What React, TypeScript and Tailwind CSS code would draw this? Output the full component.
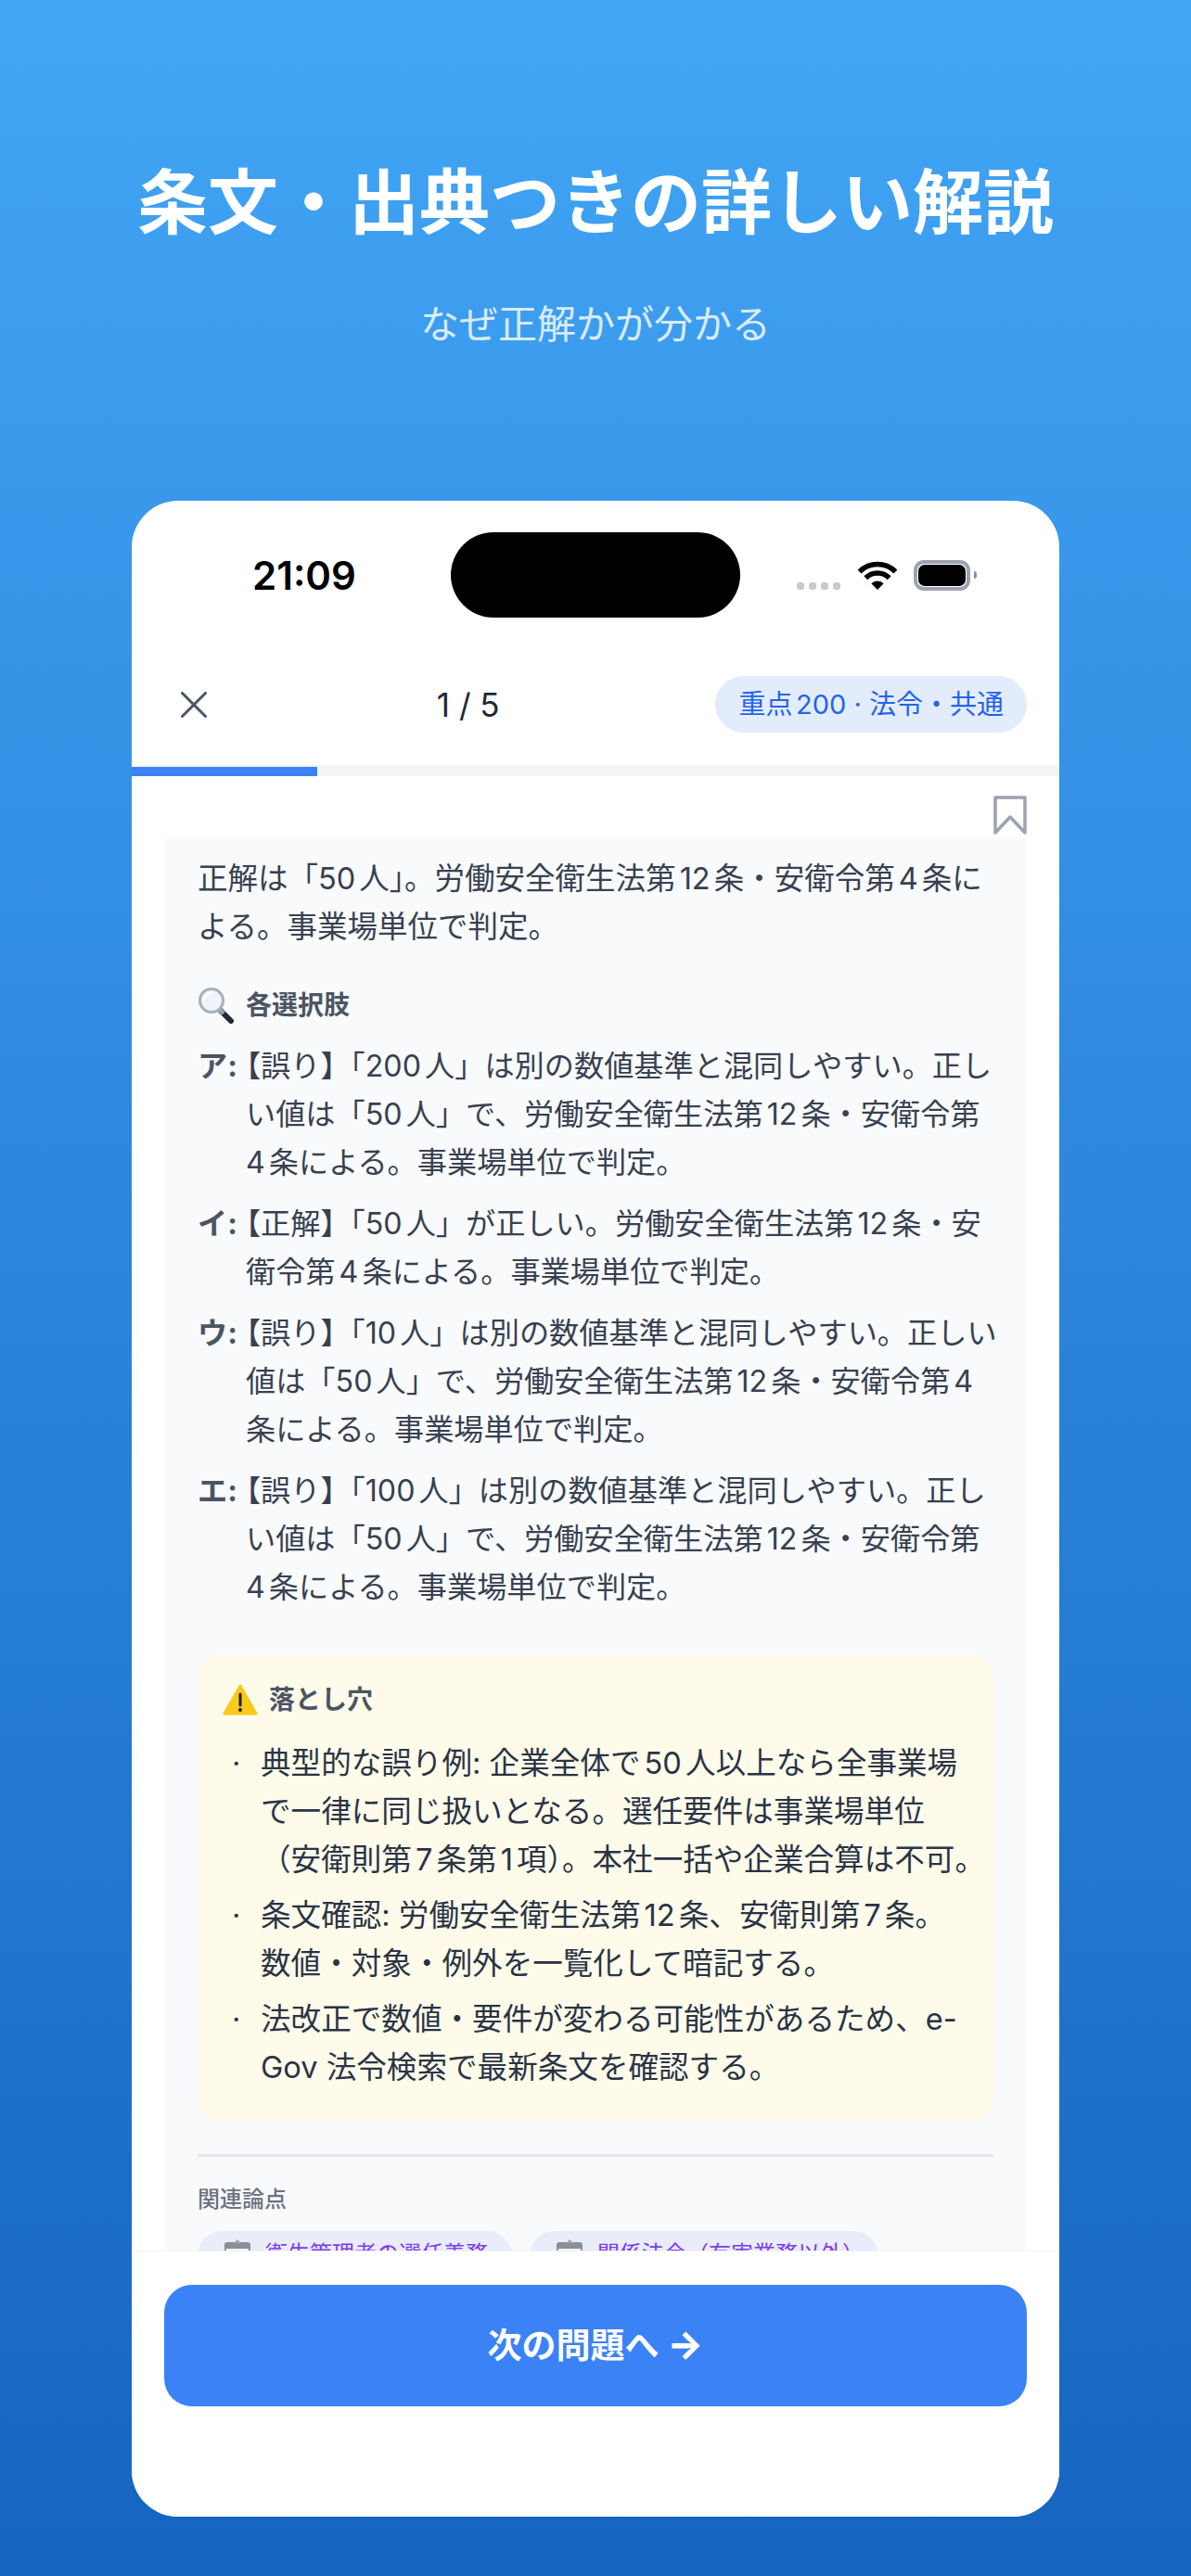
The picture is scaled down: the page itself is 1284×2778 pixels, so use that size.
import React from "react";

const choices = [
  { label: "ア:", text: "【誤り】「200人」は別の数値基準と混同しやすい。正し\nい値は「50人」で、労働安全衛生法第12条・安衛令第\n4条による。事業場単位で判定。" },
  { label: "イ:", text: "【正解】「50人」が正しい。労働安全衛生法第12条・安\n衛令第4条による。事業場単位で判定。" },
  { label: "ウ:", text: "【誤り】「10人」は別の数値基準と混同しやすい。正しい\n値は「50人」で、労働安全衛生法第12条・安衛令第4\n条による。事業場単位で判定。" },
  { label: "エ:", text: "【誤り】「100人」は別の数値基準と混同しやすい。正し\nい値は「50人」で、労働安全衛生法第12条・安衛令第\n4条による。事業場単位で判定。" },
];

const pitfalls = [
  "典型的な誤り例: 企業全体で50人以上なら全事業場\nで一律に同じ扱いとなる。選任要件は事業場単位\n（安衛則第7条第1項）。本社一括や企業合算は不可。",
  "条文確認: 労働安全衛生法第12条、安衛則第7条。\n数値・対象・例外を一覧化して暗記する。",
  "法改正で数値・要件が変わる可能性があるため、e-\nGov 法令検索で最新条文を確認する。",
];

const topics = [
  { label: "衛生管理者の選任義務", padding: "pr-[26px]" },
  { label: "関係法令（有害業務以外）", padding: "pr-[15px]" },
];

const Magnifier = () => (
  <svg width="40" height="40" viewBox="0 0 40 40" className="shrink-0">
    <path d="M25 26 L36 37" stroke="#1f2937" strokeWidth="6" strokeLinecap="round" />
    <path d="M24 25 L28 29" stroke="#9ca3af" strokeWidth="5" />
    <circle cx="15" cy="15" r="12.5" fill="#eef4fa" stroke="#a7b0ba" strokeWidth="3" />
    <path d="M7 15 A8 8 0 0 1 15 7" fill="none" stroke="#ffffff" strokeWidth="2.5" />
  </svg>
);

const Warning = () => (
  <svg width="38" height="34" viewBox="0 0 38 34" className="shrink-0">
    <path d="M19 2 L36 32 H2 Z" fill="#fbc91c" stroke="#fbc91c" strokeWidth="3" strokeLinejoin="round" />
    <path d="M19 11 V23" stroke="#1f1f1f" strokeWidth="3" strokeLinecap="round" />
    <circle cx="19" cy="28" r="2" fill="#1f1f1f" />
  </svg>
);

const Clipboard = () => (
  <svg width="28" height="36" viewBox="0 0 28 36" className="shrink-0">
    <rect x="1" y="4" width="26" height="31" rx="2" fill="#f3f4f6" stroke="#8b8f96" strokeWidth="2" />
    <rect x="1" y="4" width="26" height="6" fill="#8b8f96" />
    <path d="M10 4 L14 0 L18 4 Z" fill="#a3a7ad" />
    <path d="M5 15 H23 M5 20 H23" stroke="#c4c7cc" strokeWidth="1.5" />
  </svg>
);

const App = () => {
  return (
    <div className="h-[2778px] overflow-hidden flex flex-col items-center bg-gradient-to-b from-[#42a5f5] to-[#1565c0] font-['Inter','Noto_Sans_CJK_JP',sans-serif] [text-autospace:normal]">
      <h1 className="pt-[170px] text-[76px] leading-[96px] font-bold text-white">条文・出典つきの詳しい解説</h1>
      <p className="mt-[55px] text-[42px] leading-[58px] text-white/80">なぜ正解かが分かる</p>

      <div className="mt-[161px] w-[1000px] h-[2174px] shrink-0 flex flex-col bg-white rounded-[50px] overflow-hidden">
        {/* status bar */}
        <div className="flex pt-[34px]">
          <div className="w-[344px] pl-[130px] flex items-center text-[42px] font-semibold text-black">21:09</div>
          <div className="w-[312px] h-[92px] rounded-full bg-black" />
          <div className="flex-1 pl-[61px] flex items-center">
            <div className="flex gap-[5px] self-end mb-[30px]">
              <span className="w-[8px] h-[8px] rounded-[3px] bg-[#c9cacc]" />
              <span className="w-[8px] h-[8px] rounded-[3px] bg-[#c9cacc]" />
              <span className="w-[8px] h-[8px] rounded-[3px] bg-[#c9cacc]" />
              <span className="w-[8px] h-[8px] rounded-[3px] bg-[#c9cacc]" />
            </div>
            <svg width="42" height="31" viewBox="0 0 42 31" className="ml-[19px]">
              <path d="M1.6 11.6 A27.5 27.5 0 0 1 40.4 11.6" fill="none" stroke="#000" strokeWidth="5.5" />
              <path d="M8.3 18.3 A18 18 0 0 1 33.7 18.3" fill="none" stroke="#000" strokeWidth="5.5" />
              <path d="M21 31 L14.3 24.3 A9.5 9.5 0 0 1 27.7 24.3 Z" fill="#000" />
            </svg>
            <div className="ml-[18px] w-[61px] h-[33px] rounded-[11px] border-[4px] border-[#9ca3af] p-px">
              <div className="w-full h-full rounded-[7px] bg-black" />
            </div>
            <div className="ml-[4px] w-[3px] h-[8px] rounded-r-full bg-[#8b8f96]" />
          </div>
        </div>

        {/* nav */}
        <div className="mt-[63px] pl-[53px] pr-[35px] pb-[35px] flex items-center justify-between">
          <div className="pr-[15px]">
            <svg width="28" height="28" viewBox="0 0 28 28" className="block">
              <path d="M1.5 1.5 L26.5 26.5 M26.5 1.5 L1.5 26.5" stroke="#4b5563" strokeWidth="3" strokeLinecap="round" />
            </svg>
          </div>
          <span className="text-[35px] leading-[44px] text-[#1f2937]">1 / 5</span>
          <span className="h-[61px] px-[25px] flex items-center rounded-full bg-[#e3ecfd] text-[29px] text-[#2563eb]">
            重点200 · 法令・共通
          </span>
        </div>

        {/* progress */}
        <div className="h-[12px] shrink-0 flex items-end bg-[#f3f4f6]">
          <div className="w-[200px] h-[10px] bg-[#3b82f6]" />
        </div>

        {/* scroll area */}
        <div className="flex-1 overflow-hidden">
          <div className="pt-[21px] pr-[35px] flex justify-end">
            <svg width="36" height="42" viewBox="0 0 36 42" className="block">
              <path d="M2 2 H34 V40 L18 23 L2 40 Z" fill="none" stroke="#9ca3af" strokeWidth="3.5" strokeLinejoin="round" />
            </svg>
          </div>

          <div className="mt-[3px] mx-[35px] pt-[19px] px-[36px] bg-[#f9fafb] text-[32.5px] leading-[52px] text-[#374151]">
            <p className="whitespace-pre">{"正解は「50人」。労働安全衛生法第12条・安衛令第4条に\nよる。事業場単位で判定。"}</p>

            <div className="mt-[38px] flex items-center gap-[12px] text-[28px] leading-[40px] font-bold text-[#4b5563]">
              <Magnifier />
              <span>各選択肢</span>
            </div>

            <div className="mt-[20px] flex flex-col gap-[14px] text-[32.2px]">
              {choices.map((each) => (
                <div key={each.label} className="flex">
                  <span className="w-[52px] shrink-0 font-bold text-[#4b5563]">{each.label}</span>
                  <p className="flex-1 min-w-0 whitespace-pre [text-spacing-trim:trim-start]">{each.text}</p>
                </div>
              ))}
            </div>

            <div className="mt-[46px] pt-[29px] pb-[33px] px-[27px] rounded-[24px] bg-[#fffbeb]">
              <div className="flex items-center gap-[12px] text-[28px] leading-[40px] font-bold text-[#4b5563]">
                <Warning />
                <span>落とし穴</span>
              </div>
              <ul className="mt-[22px] flex flex-col gap-[8px] text-[32.6px] text-[#2a3444]">
                {pitfalls.map((each, index) => (
                  <li key={index} className="flex">
                    <span className="w-[41px] shrink-0 pl-[10px]">·</span>
                    <span className="flex-1 min-w-0 whitespace-pre">{each}</span>
                  </li>
                ))}
              </ul>
            </div>

            <div className="mt-[35px] h-[3px] bg-[#e5e7eb]" />
            <p className="mt-[28px] text-[24px] leading-[36px] font-medium text-[#6b7280]">関連論点</p>
            <div className="mt-[16px] flex gap-[19px]">
              {topics.map((each) => (
                <div key={each.label} className={`flex items-center gap-[16px] pl-[29px] py-[9px] rounded-[32px] bg-[#e8ecfb] text-[24px] leading-[36px] text-[#7c3aed] ${each.padding}`}>
                  <Clipboard />
                  <span className="-translate-y-[2px]">{each.label}</span>
                </div>
              ))}
            </div>
          </div>
        </div>

        {/* footer */}
        <div className="shrink-0 h-[287px] pt-[36px] px-[35px] bg-white border-t border-[#f3f4f6]">
          <button className="w-full h-[131px] rounded-[30px] bg-[#3b82f6] text-[37px] font-bold text-white">
            次の問題へ <span className="text-[41px] font-extrabold leading-none">→</span>
          </button>
        </div>
      </div>
    </div>
  );
};

export default App;
